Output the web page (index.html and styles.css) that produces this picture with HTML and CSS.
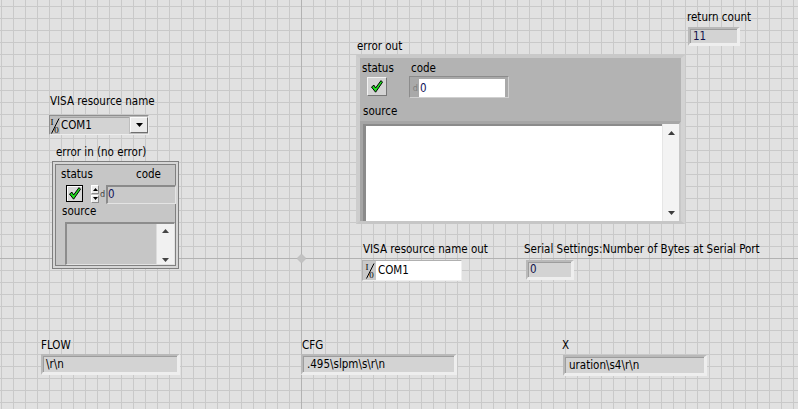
FILE: index.html
```html
<!DOCTYPE html>
<html>
<head>
<meta charset="utf-8">
<title>Front Panel</title>
<link rel="stylesheet" href="styles.css">
</head>
<body>
<div class="panel">
  <div class="axis axis-v"></div>
  <div class="axis axis-h"></div>
  <svg class="origin" width="9" height="9" viewBox="0 0 9 9"><polygon points="4.5,0 9,4.5 4.5,9 0,4.5" fill="#c2c2c2" stroke="#b6b6b6" stroke-width="0.6"/></svg>

  <!-- VISA resource name -->
  <div class="ctl c-visa-in">
    <div class="lbl">VISA resource name</div>
    <div class="ring">
      <span class="io"><svg width="10" height="17" viewBox="0 0 10 17"><text x="0.5" y="8" class="io-t">I</text><line x1="9" y1="1.5" x2="1.5" y2="16.5" stroke="#000" stroke-width="1"/><text x="4.2" y="15.5" class="io-t">0</text></svg></span>
      <span class="ring-field">COM1</span>
      <span class="ring-btn"><svg width="7" height="4" viewBox="0 0 7 4"><polygon points="0,0 7,0 3.5,4" fill="#000"/></svg></span>
    </div>
  </div>

  <!-- error in -->
  <div class="ctl c-err-in">
    <div class="lbl lbl-ein">error in (no error)</div>
    <div class="cluster-in">
      <div class="ci-labels"><span class="ci-status">status</span><span>code</span></div>
      <div class="ci-row">
        <span class="chk-in"><svg width="12" height="13" viewBox="0 0 12 13"><polygon points="0.5,7 3,5.2 4.6,8 10,0.6 11.5,2.2 4.6,12.2" fill="#1fe01f" stroke="#000" stroke-width="1" stroke-linejoin="round"/></svg></span>
        <span class="incr">
          <span class="incr-b"><svg width="5" height="3" viewBox="0 0 5 3"><polygon points="2.5,0 5,3 0,3" fill="#000"/></svg></span>
          <span class="incr-b"><svg width="5" height="3" viewBox="0 0 5 3"><polygon points="0,0 5,0 2.5,3" fill="#000"/></svg></span>
        </span>
        <span class="radix-in">d</span>
        <span class="num-in">0</span>
      </div>
      <div class="lbl ci-src-lbl">source</div>
      <div class="src-in">
        <div class="src-body"></div>
        <div class="scroll scroll-in">
          <svg width="7" height="4" viewBox="0 0 7 4"><polygon points="3.5,0 7,4 0,4" fill="#444"/></svg>
          <svg width="7" height="4" viewBox="0 0 7 4"><polygon points="0,0 7,0 3.5,4" fill="#444"/></svg>
        </div>
      </div>
    </div>
  </div>

  <!-- error out -->
  <div class="ctl c-err-out">
    <div class="lbl lbl-eout">error out</div>
    <div class="cluster-out">
      <div class="co-top">
        <div class="co-status">
          <div class="lbl">status</div>
          <span class="chk-out"><svg width="12" height="13" viewBox="0 0 12 13"><polygon points="0.5,7 3,5.2 4.6,8 10,0.6 11.5,2.2 4.6,12.2" fill="#1fe01f" stroke="#000" stroke-width="1" stroke-linejoin="round"/></svg></span>
        </div>
        <div class="co-code">
          <div class="lbl co-code-lbl">code</div>
          <div class="num-out"><span class="radix-out">d</span><span class="num-out-field">0</span></div>
        </div>
      </div>
      <div class="lbl co-src-lbl">source</div>
      <div class="src-out">
        <div class="src-body-out"></div>
        <div class="scroll scroll-out">
          <svg width="7" height="4" viewBox="0 0 7 4"><polygon points="3.5,0 7,4 0,4" fill="#3c3c3c"/></svg>
          <svg width="7" height="4" viewBox="0 0 7 4"><polygon points="0,0 7,0 3.5,4" fill="#3c3c3c"/></svg>
        </div>
      </div>
    </div>
  </div>

  <!-- return count -->
  <div class="ctl c-ret">
    <div class="lbl">return count</div>
    <div class="ind ind-ret num-txt">11</div>
  </div>

  <!-- VISA resource name out -->
  <div class="ctl c-visa-out">
    <div class="lbl">VISA resource name out</div>
    <div class="vout">
      <span class="io io-out"><svg width="10" height="17" viewBox="0 0 10 17"><text x="0.5" y="8" class="io-t">I</text><line x1="9" y1="1.5" x2="1.5" y2="16.5" stroke="#000" stroke-width="1"/><text x="4.2" y="15.5" class="io-t">0</text></svg></span>
      <span class="vout-field">COM1</span>
    </div>
  </div>

  <!-- Serial settings -->
  <div class="ctl c-serial">
    <div class="lbl">Serial Settings:Number of Bytes at Serial Port</div>
    <div class="ind ind-serial num-txt">0</div>
  </div>

  <!-- bottom strings -->
  <div class="ctl c-flow">
    <div class="lbl">FLOW</div>
    <div class="ind ind-flow">\r\n</div>
  </div>
  <div class="ctl c-cfg">
    <div class="lbl">CFG</div>
    <div class="ind ind-cfg">.495\slpm\s\r\n</div>
  </div>
  <div class="ctl c-x">
    <div class="lbl">X</div>
    <div class="ind ind-x">uration\s4\r\n</div>
  </div>
</div>
</body>
</html>
```

FILE: styles.css
```css
* { box-sizing: border-box; }
html, body { margin: 0; padding: 0; }
body {
  width: 798px;
  height: 409px;
  overflow: hidden;
  font-family: "DejaVu Sans Condensed", "DejaVu Sans", sans-serif;
  font-size: 11.5px;
  line-height: 13px;
  color: #000;
}
.panel {
  position: relative;
  width: 798px;
  height: 409px;
  overflow: hidden;
  background-color: #e1e1e1;
  background-image:
    linear-gradient(to right, #c9c9c9 1px, transparent 1px),
    linear-gradient(to bottom, #c9c9c9 1px, transparent 1px);
  background-size: 12px 12px;
  background-position: 1px 6px;
}
.axis { position: absolute; background: #b2b2b2; }
.axis-v { left: 301px; top: 0; width: 1px; height: 409px; }
.axis-h { left: 0; top: 258px; width: 798px; height: 1px; }
.origin { position: absolute; left: 297px; top: 254px; }

.ctl { position: absolute; display: flex; flex-direction: column; align-items: flex-start; }
.lbl { white-space: nowrap; height: 13px; }

.io-t { font-family: "Liberation Serif", serif; font-size: 9px; fill: #000; }

/* VISA resource name (ring) */
.c-visa-in { left: 49px; top: 95px; }
.c-visa-in .lbl { margin-left: 1px; }
.ring {
  margin-top: 7px;
  width: 100px;
  height: 20px;
  display: flex;
  align-items: center;
  background: #bdbdbd;
  border: 1px solid;
  border-color: #8f8f8f #ededed #ededed #8f8f8f;
}
.io { width: 10px; height: 17px; display: flex; }
.ring-field {
  width: 69px;
  height: 17px;
  background: #d3d3d3;
  border-top: 1px solid #a3a3a3;
  display: flex;
  align-items: center;
  padding-left: 1px;
}
.ring-btn {
  margin-left: 1px;
  width: 18px;
  height: 16px;
  display: flex;
  align-items: center;
  justify-content: center;
  background: #ebebeb;
  border: 1px solid;
  border-color: #fbfbfb #6f6f6f #6f6f6f #fbfbfb;
}

/* error in cluster */
.c-err-in { left: 52px; top: 146px; }
.lbl-ein { margin-left: 4px; }
.cluster-in {
  margin-top: 2px;
  width: 127px;
  height: 108px;
  background: #c6c6c6;
  border: 1px solid #7e7e7e;
  box-shadow: inset 0 0 0 2px #d6d6d6, inset 0 0 0 3px #808080;
  display: flex;
  flex-direction: column;
  align-items: flex-start;
  padding-top: 6px;
}
.ci-labels { display: flex; margin-left: 8px; height: 13px; white-space: nowrap; }
.ci-status { width: 75px; }
.ci-row { display: flex; align-items: flex-start; margin-top: 4px; height: 19px; }
.chk-in {
  margin-left: 13px;
  width: 17px;
  height: 17px;
  border: 1px solid #000;
  background: #d9d9d9;
  box-shadow: inset 1px 1px 0 #fdfdfd;
  display: flex;
  align-items: center;
  justify-content: center;
}
.incr {
  margin-left: 8px;
  width: 8px;
  height: 18px;
  display: flex;
  flex-direction: column;
  gap: 1px;
}
.incr-b {
  flex: 1;
  background: #ececec;
  border: 1px solid;
  border-color: #fff #8a8a8a #8a8a8a #fff;
  display: flex;
  align-items: center;
  justify-content: center;
}
.radix-in {
  margin-left: 1px;
  width: 6px;
  font-size: 9px;
  line-height: 19px;
  color: #404040;
}
.num-in {
  width: 70px;
  height: 19px;
  background: #c9c9c9;
  border: 1px solid;
  border-width: 2px 1px 1px 2px;
  border-color: #8a8a8a #e4e4e4 #e4e4e4 #8a8a8a;
  color: #12125a;
  line-height: 15px;
  padding-left: 0;
}
.ci-src-lbl { margin-top: 1px; margin-left: 9px; }
.src-in {
  margin-top: 4px;
  margin-left: 12px;
  width: 110px;
  height: 43px;
  display: flex;
  border: 1px solid;
  border-width: 2px 1px 1px 2px;
  border-color: #8c8c8c #e2e2e2 #e2e2e2 #8c8c8c;
  background: #c6c6c6;
}
.src-body { flex: 1; }
.scroll {
  display: flex;
  flex-direction: column;
  align-items: center;
  justify-content: space-between;
  background: #f1f1f1;
  border-left: 1px solid #dcdcdc;
}
.scroll-in { width: 18px; padding: 5px 0 2px; }

/* error out cluster */
.c-err-out { left: 356px; top: 40px; }
.lbl-eout { margin-left: 1px; }
.cluster-out {
  margin-top: 2px;
  width: 329px;
  height: 169px;
  background: #b3b3b3;
  border-style: solid;
  border-width: 3px 4px 3px 4px;
  border-color: #c9c9c9 #d3d3d3 #c6c6c6 #cdcdcd;
  display: flex;
  flex-direction: column;
  align-items: flex-start;
}
.co-top { display: flex; margin-top: 4px; }
.co-status { width: 47px; margin-left: 2px; display: flex; flex-direction: column; align-items: flex-start; }
.chk-out {
  margin-top: 2px;
  margin-left: 5px;
  width: 20px;
  height: 19px;
  background: #d4d4d4;
  border: 1px solid;
  border-color: #f2f2f2 #777 #777 #f2f2f2;
  display: flex;
  align-items: center;
  justify-content: center;
}
.co-code { display: flex; flex-direction: column; align-items: flex-start; }
.co-code-lbl { margin-left: 2px; }
.num-out {
  margin-top: 1px;
  width: 100px;
  height: 22px;
  display: flex;
  background: #a9a9a9;
  border: 1px solid;
  border-color: #8c8c8c #d0d0d0 #d0d0d0 #8c8c8c;
  padding: 2px 3px 0 0;
}
.radix-out {
  width: 9px;
  font-size: 9px;
  line-height: 18px;
  color: #7e7e7e;
  text-align: right;
  padding-right: 1px;
}
.num-out-field {
  flex: 1;
  background: #fff;
  color: #12125a;
  line-height: 18px;
  padding-left: 1px;
}
.co-src-lbl { margin-top: 7px; margin-left: 3px; }
.src-out {
  margin-top: 3px;
  width: 321px;
  flex: 1;
  display: flex;
  background: #fff;
  border-style: solid;
  border-width: 3px 2px 0 3px;
  border-color: #a6a6a6 #c8c8c8 #c8c8c8 #a6a6a6;
  box-shadow: inset 3px 2px 0 #8b8b8b;
}
.src-body-out { flex: 1; }
.scroll-out { width: 17px; padding: 7px 0 6px; background: #f3f3f3; border-left: 1px solid #e6e6e6; }

/* indicators */
.ind {
  background: #d3d3d3;
  border-style: solid;
  border-width: 2px 3px 3px 2px;
  border-color: #b9b9b9 #eeeeee #eeeeee #b9b9b9;
  box-shadow: inset 1px 1px 0 #9d9d9d;
  padding-left: 3px;
  display: flex;
  align-items: center;
  white-space: nowrap;
  overflow: hidden;
}
.num-txt { color: #12124a; }

.c-ret { left: 687px; top: 11px; }
.ind-ret { margin-top: 3px; margin-left: 1px; width: 52px; height: 19px; }

.c-visa-out { left: 362px; top: 243px; }
.c-visa-out .lbl { margin-left: 1px; }
.vout {
  margin-top: 4px;
  width: 100px;
  height: 21px;
  display: flex;
  align-items: center;
  background: #c9c9c9;
  border: 1px solid;
  border-color: #b0b0b0 #efefef #efefef #b0b0b0;
}
.io-out { margin-left: 0; width: 13px; justify-content: center; }
.vout-field {
  width: 85px;
  height: 19px;
  background: #fff;
  display: flex;
  align-items: center;
  padding-left: 2px;
}

.c-serial { left: 524px; top: 243px; }
.ind-serial { margin-top: 4px; margin-left: 2px; width: 48px; height: 20px; padding-left: 2px; }

.c-flow { left: 41px; top: 339px; }
.ind-flow { margin-top: 2px; width: 139px; height: 21px; }
.c-cfg { left: 301px; top: 339px; }
.c-cfg .lbl { margin-left: 1px; }
.ind-cfg { margin-top: 2px; width: 156px; height: 21px; padding-left: 4px; }
.c-x { left: 562px; top: 339px; }
.ind-x { margin-top: 3px; margin-left: 1px; width: 144px; height: 21px; padding-left: 4px; }
```
